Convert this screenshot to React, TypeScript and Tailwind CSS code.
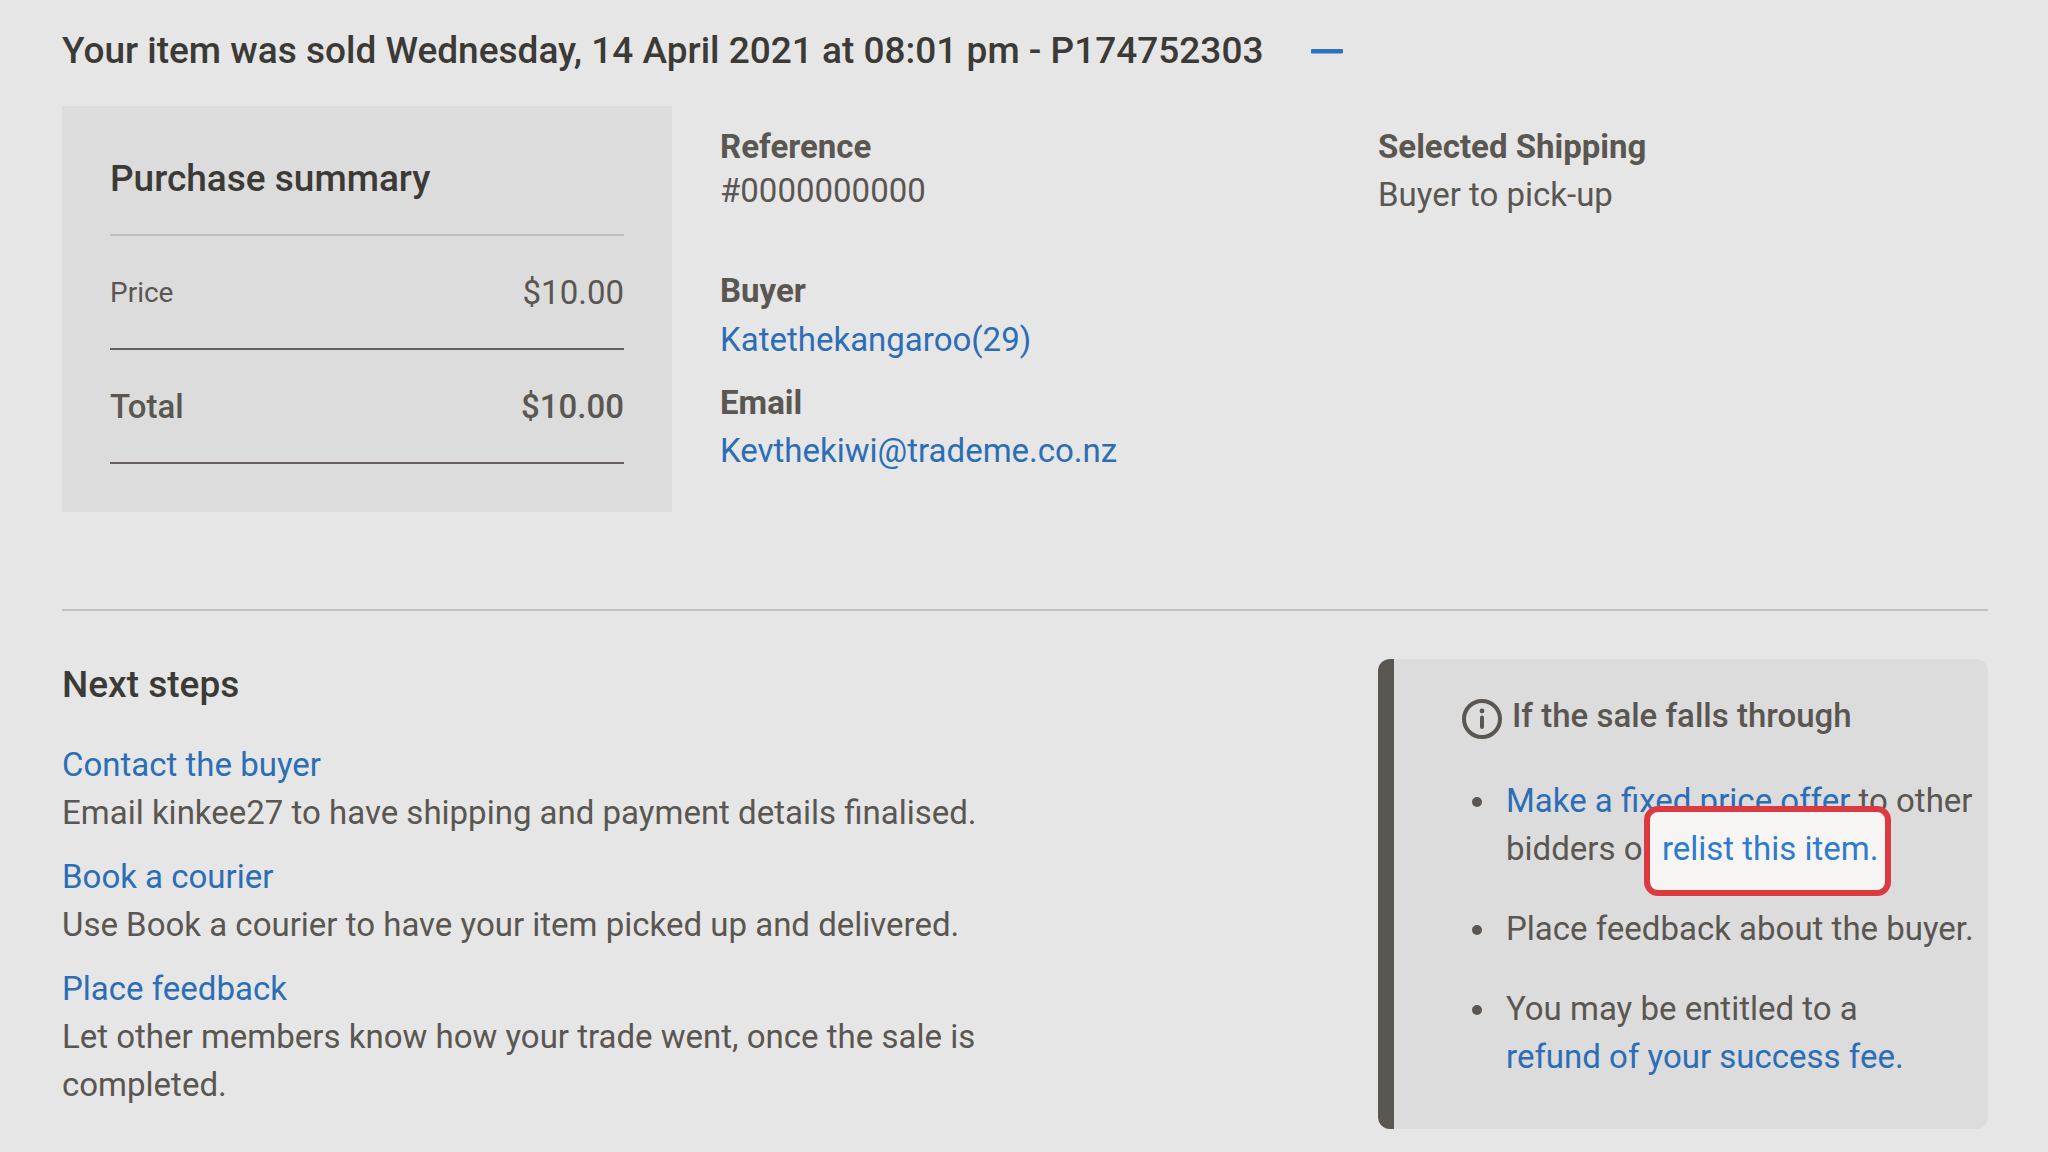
import React, { useState } from "react";

const steps = [
  {
    title: "Contact the buyer",
    text: "Email kinkee27 to have shipping and payment details finalised.",
  },
  {
    title: "Book a courier",
    text: "Use Book a courier to have your item picked up and delivered.",
  },
  {
    title: "Place feedback",
    text: "Let other members know how your trade went, once the sale is completed.",
  },
];

const InfoIcon = () => (
  <svg viewBox="0 0 40 40" className="mt-2 size-10 shrink-0" fill="none" aria-hidden="true">
    <circle cx="20" cy="20" r="18" stroke="#5a5652" strokeWidth="4" />
    <circle cx="20" cy="12" r="2.4" fill="#5a5652" />
    <path d="M20 18.5v9.5" stroke="#5a5652" strokeWidth="4" strokeLinecap="round" />
  </svg>
);

const Bullet = ({ children }: { children: React.ReactNode }) => (
  <li className="flex gap-6">
    <span className="mt-5 size-[10px] shrink-0 rounded-full bg-[#5a5652]" />
    <p>{children}</p>
  </li>
);

const PurchaseSummary = () => {
  return (
    <div className="bg-[#dcdcdc] p-12">
      <h3 className="border-b-2 border-[#c1c0ba] pb-[30px] text-[37px] leading-[50px] font-medium text-[#3b3a36]">
        Purchase summary
      </h3>
      <dl>
        <div className="flex h-[114px] items-center justify-between border-b-2 border-[#65605d] pt-0.5">
          <dt className="text-[28px]">Price</dt>
          <dd>$10.00</dd>
        </div>
        <div className="flex h-[114px] items-center justify-between border-b-2 border-[#65605d] pt-0.5 font-medium">
          <dt>Total</dt>
          <dd>$10.00</dd>
        </div>
      </dl>
    </div>
  );
};

const SaleFallsThrough = () => {
  return (
    <aside className="rounded-xl border-l-16 border-[#5a5652] bg-[#dcdcdc] pt-8 pb-12 pl-[68px]">
      <h3 className="flex items-start gap-[10px] leading-[50px] font-medium">
        <InfoIcon />
        If the sale falls through
      </h3>

      <ul className="mt-9 flex flex-col gap-8 pl-[10px]">
        <Bullet>
          <a href="#offer" className="text-[#2c6eb6]">Make a fixed price offer</a> to other bidders or{" "}
          <a href="#relist" className="relative isolate inline-block whitespace-nowrap text-[#2f7bcf]">
            <span className="absolute -top-[19px] -right-3 -bottom-[23px] -left-[18px] -z-10 rounded-[14px] border-6 border-[#db3a40] bg-[#f7f5f4]" />
            relist this item.
          </a>
        </Bullet>
        <Bullet>Place feedback about the buyer.</Bullet>
        <Bullet>
          You may be entitled to a{" "}
          <a href="#refund" className="inline-block whitespace-nowrap text-[#2c6eb6]">
            refund of your success fee.
          </a>
        </Bullet>
      </ul>
    </aside>
  );
};

const App = () => {
  const [isExpanded, setIsExpanded] = useState(true);

  const toggleDetails = () => {
    setIsExpanded(!isExpanded);
  };

  return (
    <main className="min-h-screen bg-[#e6e6e6] pt-[27px] pr-[60px] pb-[23px] pl-[62px] font-[Roboto,sans-serif] text-[33px] leading-[48px] text-[#5a5652]">
      <div className="flex items-center gap-12">
        <h2 className="text-[37px] leading-[48px] font-medium text-[#3b3a36]">
          Your item was sold Wednesday, 14 April 2021 at 08:01 pm - P174752303
        </h2>
        <button type="button" onClick={toggleDetails} aria-label="Toggle sale details" aria-expanded={isExpanded}>
          <svg viewBox="0 0 32 32" className="size-8" aria-hidden="true">
            <rect y="14" width="32" height="4.5" rx="1" fill="#2c73bd" />
            {!isExpanded && <rect x="14" y="0" width="4.5" height="32" rx="1" fill="#2c73bd" />}
          </svg>
        </button>
      </div>

      {isExpanded && (
        <section className="mt-[31px] grid grid-cols-3 gap-12">
          <PurchaseSummary />

          <div className="pt-[17px]">
            <h4 className="font-bold">Reference</h4>
            <p className="leading-10">#0000000000</p>
            <h4 className="mt-14 font-bold">Buyer</h4>
            <a href="#buyer" className="block leading-[50px] text-[#2c6eb6]">Katethekangaroo(29)</a>
            <h4 className="mt-[14px] font-bold">Email</h4>
            <a href="mailto:Kevthekiwi@trademe.co.nz" className="block text-[#2c6eb6]">Kevthekiwi@trademe.co.nz</a>
          </div>

          <div className="pt-[17px]">
            <h4 className="font-bold">Selected Shipping</h4>
            <p>Buyer to pick-up</p>
          </div>
        </section>
      )}

      <section className="mt-[97px] grid grid-cols-3 gap-12 border-t-2 border-[#c1c0ba] pt-12">
        <div className="col-span-2">
          <h3 className="text-[37px] leading-[52px] font-medium text-[#3b3a36]">Next steps</h3>
          <ul className="mt-[30px] flex w-3/4 flex-col gap-4">
            {steps.map((step) => (
              <li key={step.title}>
                <a href="#step" className="text-[#2c6eb6]">{step.title}</a>
                <p>{step.text}</p>
              </li>
            ))}
          </ul>
        </div>

        <SaleFallsThrough />
      </section>
    </main>
  );
};

export default App;
